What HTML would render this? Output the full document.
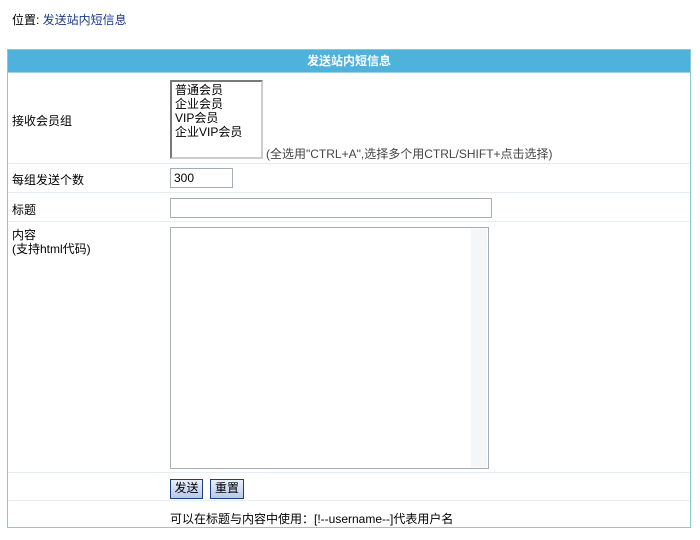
<!DOCTYPE html>
<html><head><meta charset="utf-8"><style>
body{margin:0;background:#fff;font:12px "Liberation Sans","Noto Sans CJK SC",sans-serif;color:#000;position:relative;width:700px;height:540px;overflow:hidden}
.a{position:absolute}
.loc{left:12px;top:11px}
.loc span{color:#1a3a8c}
.tbl{left:7px;top:49px;width:684px;height:479px;border:1px solid #8cc8d0;box-sizing:border-box}
.hd{left:8px;top:50px;width:682px;height:22px;background:#4fb2dc;color:#fff;font-weight:bold;text-align:center;line-height:23px;border-bottom:1px solid #9fd2e6}
.ln{left:8px;width:682px;height:1px;background:#e4eef0}
.lb{left:12px}
.box{background:#fff;border:1px solid #a5acb2;box-sizing:border-box}
.btn{border:1px solid #1f3f7a;background:linear-gradient(#e8eefa,#b9c8ea);box-sizing:border-box;height:20px;line-height:17px;text-align:center;font-size:12px}
</style></head><body>
<div class="a loc">位置: <span>发送站内短信息</span></div>
<div class="a tbl"></div>
<div class="a hd">发送站内短信息</div>
<div class="a ln" style="top:163px"></div>
<div class="a ln" style="top:192px"></div>
<div class="a ln" style="top:221px"></div>
<div class="a ln" style="top:472px"></div>
<div class="a ln" style="top:500px"></div>
<div class="a lb" style="top:112px">接收会员组</div>
<div class="a box" style="left:170px;top:80px;width:93px;height:79px;border:2px inset #ccc;padding:1px 3px;line-height:14px">普通会员<br>企业会员<br>VIP会员<br>企业VIP会员</div>
<div class="a" style="left:266px;top:145px;color:#444">(全选用"CTRL+A",选择多个用CTRL/SHIFT+点击选择)</div>
<div class="a lb" style="top:171px">每组发送个数</div>
<div class="a box" style="left:170px;top:168px;width:63px;height:20px;padding:2px 3px">300</div>
<div class="a lb" style="top:201px">标题</div>
<div class="a box" style="left:170px;top:198px;width:322px;height:20px"></div>
<div class="a lb" style="top:228px;line-height:14px">内容<br>(支持html代码)</div>
<div class="a box" style="left:170px;top:227px;width:319px;height:242px"><div class="a" style="right:1px;top:1px;width:16px;height:238px;background:#f4f6f8"></div></div>
<div class="a btn" style="left:170px;top:479px;width:33px">发送</div>
<div class="a btn" style="left:210px;top:479px;width:34px">重置</div>
<div class="a" style="left:170px;top:510px">可以在标题与内容中使用：[!--username--]代表用户名</div>
</body></html>
